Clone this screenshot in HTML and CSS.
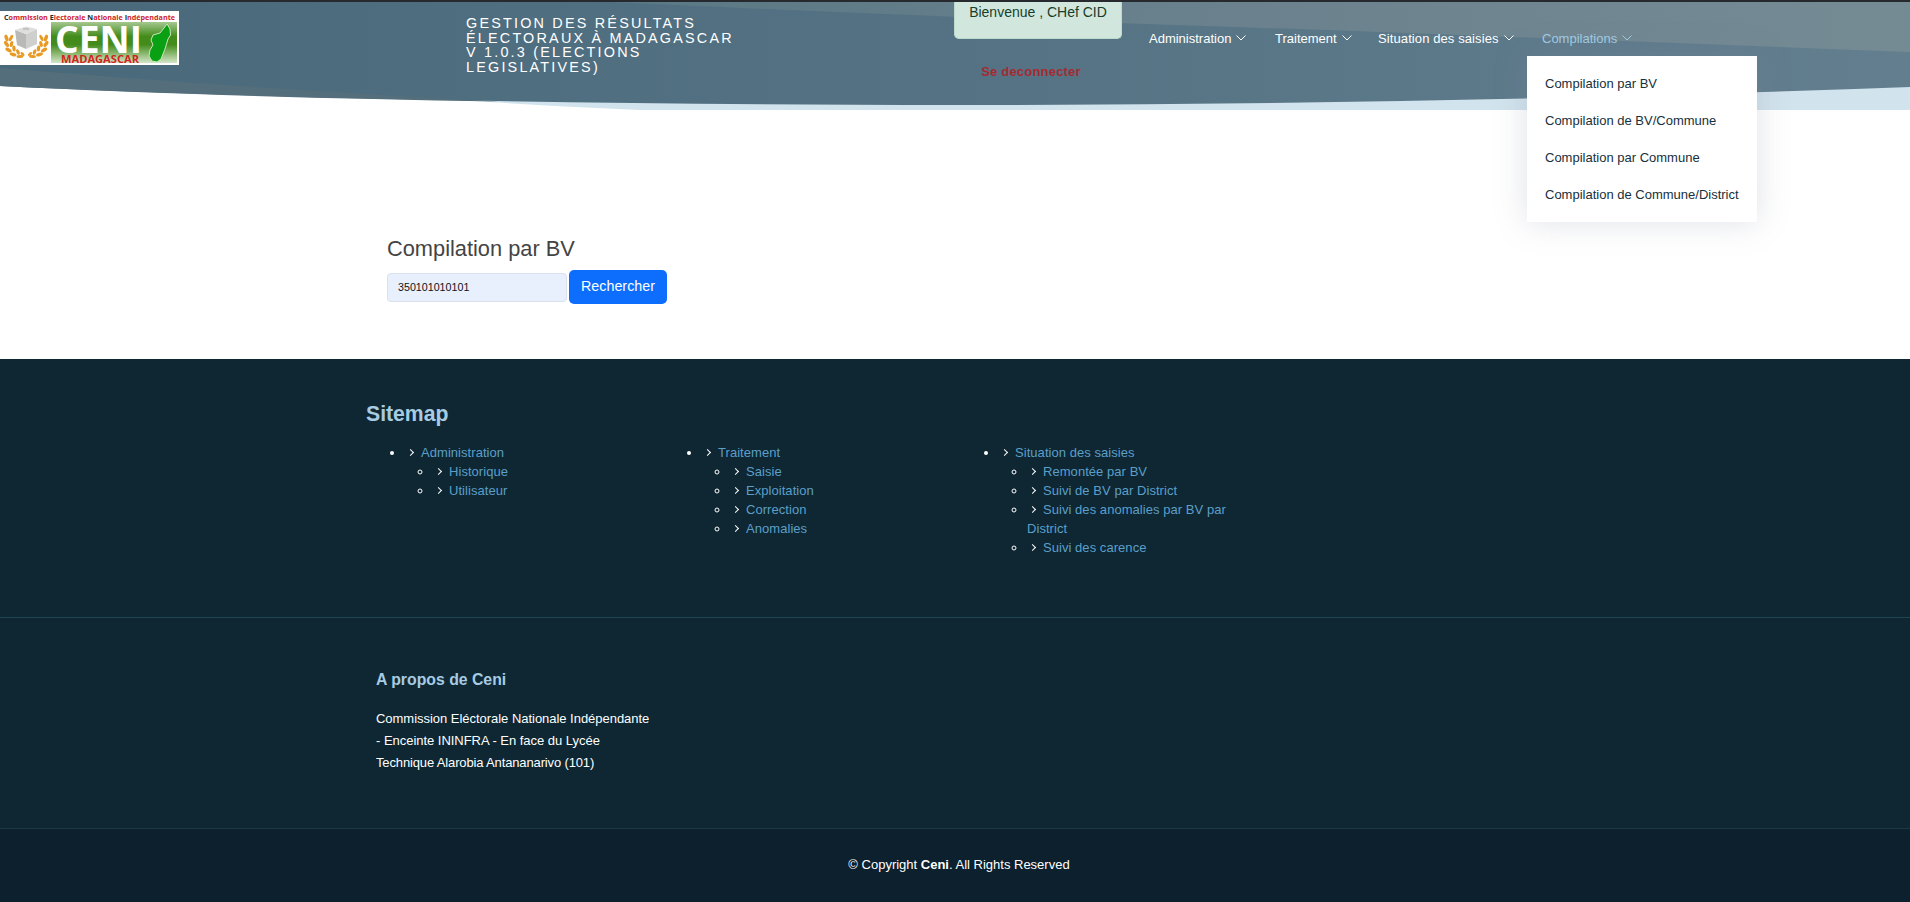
FILE: index.html
```html
<!DOCTYPE html>
<html lang="fr">
<head>
<meta charset="utf-8">
<title>Compilation par BV</title>
<link rel="stylesheet" href="styles.css">
</head>
<body>
<header class="header">
  <svg class="header-bg" width="1910" height="110" viewBox="0 0 1910 110" preserveAspectRatio="none">
    <defs>
      <linearGradient id="sea"><stop offset="0" stop-color="#49697b"/><stop offset=".5" stop-color="#547283"/><stop offset="1" stop-color="#637f8f"/></linearGradient>
      <linearGradient id="haze"><stop offset="0" stop-color="#5a7885"/><stop offset=".5" stop-color="#6b828e"/><stop offset="1" stop-color="#758b94"/></linearGradient>
    </defs>
    <path d="M430 98Q540 106 640 110H1910V80H430Z" fill="#d1e3ed"/>
    <path d="M0 0H1910V87Q1430 105 955 105Q380 104 0 86Z" fill="url(#sea)"/>
    <path d="M0 68Q240 88 500 101.5Q220 97 0 86Z" fill="#546f7b"/>
    <path d="M610 2Q1000 20 1300 29Q1600 40 1910 52V2Z" fill="url(#haze)"/>
    <path d="M0 0H1910V2H0Z" fill="#26292e"/>
  </svg>
  <svg class="logo" width="179" height="54" viewBox="0 0 179 54">
    <defs>
      <linearGradient id="field" x2="0" y2="1"><stop offset="0" stop-color="#a5c78f"/><stop offset=".35" stop-color="#438c1c"/><stop offset=".55" stop-color="#438c1c"/><stop offset="1" stop-color="#d5e5c9"/></linearGradient>
      <g id="branch" fill="#e99a25">
        <ellipse cx="6.500" cy="27" rx="1.800" ry="3.500" transform="rotate(-18 6.500 27)"/>
        <ellipse cx="11" cy="27" rx="1.500" ry="3.500" transform="rotate(28 11 27)"/>
        <ellipse cx="6.500" cy="33" rx="1.800" ry="3.500" transform="rotate(-35 6.500 33)"/>
        <ellipse cx="11.500" cy="33" rx="1.700" ry="3" transform="rotate(15 11.500 33)"/>
        <ellipse cx="8.500" cy="39" rx="1.800" ry="3.500" transform="rotate(-58 8.500 39)"/>
        <ellipse cx="14" cy="37.500" rx="1.700" ry="3" transform="rotate(-5 14 37.500)"/>
        <ellipse cx="13" cy="43.500" rx="1.700" ry="3.500" transform="rotate(-75 13 43.500)"/>
        <ellipse cx="18" cy="41" rx="1.600" ry="3" transform="rotate(-25 18 41)"/>
        <ellipse cx="20" cy="45.500" rx="1.500" ry="3.500" transform="rotate(-95 20 45.500)"/>
        <ellipse cx="22.500" cy="43" rx="1.300" ry="2.500" transform="rotate(-45 22.500 43)"/>
      </g>
    </defs>
    <rect width="179" height="54" fill="#fff"/>
    <rect x="51" y="11" width="126" height="41" fill="url(#field)"/>
    <text class="logo-top" x="4" y="8.500" textLength="171" lengthAdjust="spacingAndGlyphs"><tspan class="ink">C</tspan>ommission <tspan class="ink">E</tspan>lectorale <tspan class="ink">N</tspan>ationale <tspan class="ink">I</tspan>ndépendante</text>
    <use href="#branch"/>
    <use href="#branch" transform="matrix(-1 0 0 1 52.500 0)"/>
    <path d="M15 19L26 23V38L17 34Z" fill="#b9b9b8"/>
    <path d="M26 23L37 18V33L26 38Z" fill="#cfcfcd"/>
    <path d="M15 19L26 15.500L37 18L26 23Z" fill="#dededc"/>
    <path d="M23 18H29" stroke="#aaa" stroke-width="1"/>
    <text class="logo-name" x="55" y="42" textLength="87" lengthAdjust="spacingAndGlyphs">CENI</text>
    <text class="logo-land" x="61" y="51.500" textLength="78" lengthAdjust="spacingAndGlyphs">MADAGASCAR</text>
    <path d="M167 13L170 18L170.500 24L168 28L165 38L161 48L157 51L152 50L149 45L150 39L153 34L151 29L153 24L160 22L164 17Z" fill="#09a013" stroke="#c8e6b8" stroke-width="1"/>
  </svg>
  <p class="title">GESTION DES RÉSULTATS<br>ÉLECTORAUX À MADAGASCAR<br>V 1.0.3 (ELECTIONS<br>LEGISLATIVES)</p>
  <div class="session">
    <div class="welcome">Bienvenue , CHef CID</div>
    <a class="logout">Se deconnecter</a>
  </div>
  <nav class="nav">
    <a class="nav-item n1">Administration<svg class="chev" viewBox="0 0 10 6"><path d="M.5 .5L5 5L9.500 .5"/></svg></a>
    <a class="nav-item n2">Traitement<svg class="chev" viewBox="0 0 10 6"><path d="M.5 .5L5 5L9.500 .5"/></svg></a>
    <a class="nav-item n3">Situation des saisies<svg class="chev" viewBox="0 0 10 6"><path d="M.5 .5L5 5L9.500 .5"/></svg></a>
    <a class="nav-item n4">Compilations<svg class="chev" viewBox="0 0 10 6"><path d="M.5 .5L5 5L9.500 .5"/></svg></a>
  </nav>
  <div class="dropdown">
    <a>Compilation par BV</a>
    <a>Compilation de BV/Commune</a>
    <a>Compilation par Commune</a>
    <a>Compilation de Commune/District</a>
  </div>
</header>
<main class="main">
  <h1>Compilation par BV</h1>
  <form class="search">
    <input type="text" value="350101010101">
    <button type="button">Rechercher</button>
  </form>
</main>
<footer class="footer">
  <section class="sitemap">
    <h2>Sitemap</h2>
    <div class="columns">
      <ul class="tree">
        <li><i></i><a>Administration</a>
          <ul><li><i></i><a>Historique</a></li><li><i></i><a>Utilisateur</a></li></ul></li>
      </ul>
      <ul class="tree">
        <li><i></i><a>Traitement</a>
          <ul><li><i></i><a>Saisie</a></li><li><i></i><a>Exploitation</a></li><li><i></i><a>Correction</a></li><li><i></i><a>Anomalies</a></li></ul></li>
      </ul>
      <ul class="tree">
        <li><i></i><a>Situation des saisies</a>
          <ul><li><i></i><a>Remontée par BV</a></li><li><i></i><a>Suivi de BV par District</a></li><li><i></i><a>Suivi des anomalies par BV par<br>District</a></li><li><i></i><a>Suivi des carence</a></li></ul></li>
      </ul>
    </div>
  </section>
  <section class="about">
    <h3>A propos de Ceni</h3>
    <p>Commission Eléctorale Nationale Indépendante<br>- Enceinte ININFRA - En face du Lycée<br><span class="tight">Technique Alarobia Antananarivo (101)</span></p>
  </section>
  <div class="copyright">© Copyright <strong>Ceni</strong>. All Rights Reserved</div>
</footer>
</body>
</html>
```

FILE: styles.css
```css
* { box-sizing: border-box; }
body {
  margin: 0;
  background: #fff;
  color: #444;
  font: 13px/19px "Liberation Sans", Arial, sans-serif;
  overflow: hidden;
}
h1, h2, h3, p { margin: 0; font-weight: normal; }

.header {
  position: relative;
  display: flex;
  align-items: flex-start;
  height: 110px;
}
.header-bg { position: absolute; inset: 0; }
.logo { position: relative; flex: none; margin-top: 11px; }
.logo-top { font: bold 7.5px "Open Sans", sans-serif; fill: #cf2229; }
.logo-top .ink { fill: #17302f; }
.logo-name { font: bold 37px "Open Sans", sans-serif; fill: #fff; }
.logo-land { font: bold 11px "Open Sans", sans-serif; fill: #d0261c; }
.title {
  position: relative;
  width: 300px;
  margin: 16px 0 0 287px;
  color: #fff;
  font-size: 14.4px;
  line-height: 14.6px;
  letter-spacing: 2.2px;
  white-space: nowrap;
}
.session {
  position: relative;
  display: flex;
  flex-direction: column;
  align-items: center;
  width: 168px;
  margin: 2px 0 0 188px;
}
.welcome {
  width: 168px;
  height: 37px;
  background: #d1e7dd;
  border: 1px solid #badbcc;
  border-top: 0;
  border-radius: 0 0 5px 5px;
  color: #173d2c;
  font-size: 14px;
  line-height: 20px;
  text-align: center;
  white-space: nowrap;
}
.logout {
  margin: 23px 14px 0 0;
  color: #a42a32;
  font-weight: bold;
  letter-spacing: .2px;
}
.nav {
  position: relative;
  display: flex;
  margin: 29px 0 0 27px;
  color: #fff;
  white-space: nowrap;
}
.nav-item { display: flex; align-items: center; gap: 5px; line-height: 20px; }
.n1 { width: 126px; }
.n2 { width: 103px; }
.n3 { width: 164px; letter-spacing: .1px; }
.n4 { color: #a2cce3; }
.chev { width: 10px; height: 6px; fill: none; stroke: currentColor; margin-top: -2px; }
.dropdown {
  position: absolute;
  left: 1527px;
  top: 56px;
  width: 230px;
  height: 166px;
  padding: 9px 18px;
  background: #fff;
  box-shadow: 0 0 30px rgba(127, 137, 161, .25);
  color: #16303c;
  white-space: nowrap;
}
.dropdown a { display: block; line-height: 37px; }

.main { height: 249px; padding: 124px 0 0 387px; }
.main h1 { font-size: 21.8px; line-height: 29px; }
.search { display: flex; align-items: center; gap: 2px; margin-top: 7px; }
.search input {
  width: 180px;
  height: 29px;
  padding: 0 10px;
  background: #e8f0fe;
  border: 1px solid #d9e1ec;
  border-radius: 4px;
  color: #111;
  font: 10.7px "Liberation Sans", Arial, sans-serif;
}
.search button {
  width: 98px;
  height: 34px;
  padding: 0 0 2px;
  background: #0d6efd;
  border: 0;
  border-radius: 5px;
  color: #fff;
  font: 14.3px "Liberation Sans", Arial, sans-serif;
}

.footer { height: 543px; background: #0e2733; color: #fff; }
.sitemap {
  height: 259px;
  padding: 41px 0 0 366px;
  border-bottom: 1px solid #1f4455;
}
.sitemap h2 { color: #a7cbe2; font-size: 21.2px; font-weight: bold; line-height: 28px; }
.columns { display: flex; margin-top: 16px; }
.tree { width: 297px; margin: 0; padding-left: 39px; line-height: 18.9px; white-space: nowrap; }
.tree ul { margin: 0; padding-left: 28px; }
.tree a { color: #5c9fc9; letter-spacing: .05px; }
.tree i {
  display: inline-block;
  width: 5px;
  height: 5px;
  margin: 0 8px 2px 3px;
  border: solid #fff;
  border-width: 1.3px 1.3px 0 0;
  transform: rotate(45deg);
}
.about { height: 211px; padding: 50px 0 0 376px; border-bottom: 1px solid #1b3846; }
.about h3 { color: #a7cbe2; font-size: 15.8px; font-weight: bold; line-height: 24px; }
.about p { margin-top: 16px; line-height: 22px; letter-spacing: -.03px; }
.about .tight { letter-spacing: -.14px; }
.copyright {
  height: 73px;
  padding: 26px 0 0 8px;
  background: #0c212d;
  text-align: center;
  line-height: 20px;
}
```
